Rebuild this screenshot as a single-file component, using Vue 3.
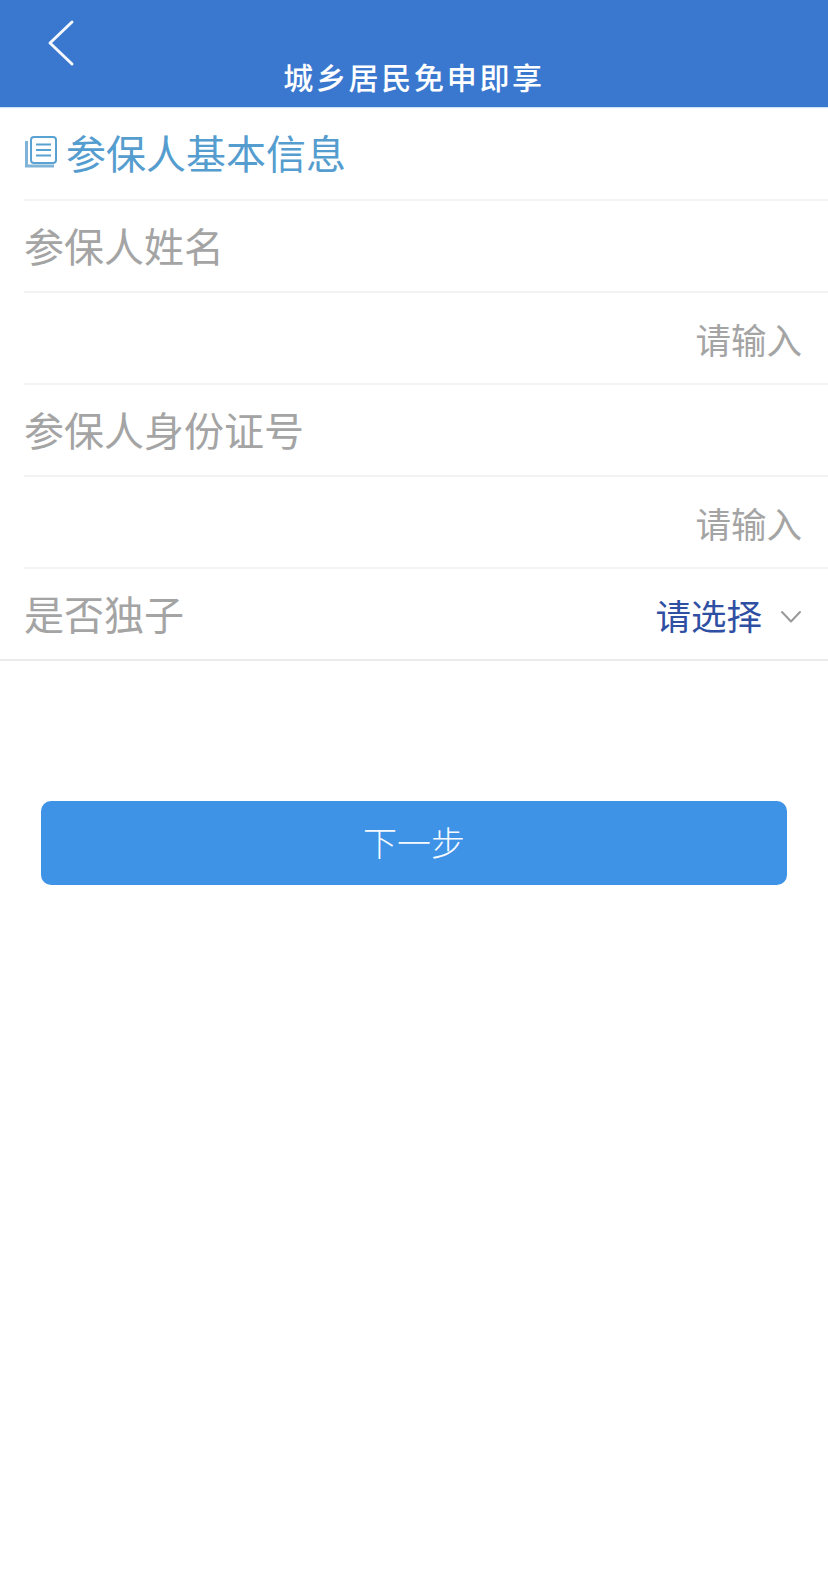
<script setup>
const rows = [
  { text: "参保人姓名", type: "label" },
  { text: "请输入", type: "input" },
  { text: "参保人身份证号", type: "label" },
  { text: "请输入", type: "input" },
];
</script>

<template>
  <div class="page">
    <header class="topbar">
      <svg class="back" width="34" height="50" viewBox="0 0 34 50">
        <path d="M27 4 L5 25 L27 46" fill="none" stroke="#f4f7fc" stroke-width="3" stroke-linecap="round" stroke-linejoin="round" />
      </svg>
      <div class="title">城乡居民免申即享</div>
    </header>

    <section class="form">
      <div class="row heading">
        <svg class="doc" width="34" height="34" viewBox="0 0 34 34">
          <path d="M2.5 6 V31 H30" fill="none" stroke="#7fb4d8" stroke-width="3" />
          <rect x="7" y="2" width="25" height="26" rx="3" fill="none" stroke="#5aa2d2" stroke-width="2" />
          <path d="M12 9.5 H27 M12 15 H27 M12 20.5 H27" stroke="#5aa2d2" stroke-width="2" />
        </svg>
        <span>参保人基本信息</span>
      </div>
      <div v-for="(row, i) in rows" :key="i" class="row" :class="row.type">{{ row.text }}</div>
      <div class="row select">
        <span class="select-label">是否独子</span>
        <span class="select-value">请选择</span>
        <svg class="chevron" width="22" height="14" viewBox="0 0 22 14">
          <path d="M2 2 L11 11.5 L20 2" fill="none" stroke="#999" stroke-width="2" stroke-linecap="round" stroke-linejoin="round" />
        </svg>
      </div>
    </section>

    <button type="button" class="next">下一步</button>
  </div>
</template>

<style>
html,
body {
  background: #fff;
}
</style>

<style scoped>
.page {
  width: 828px;
  height: 1586px;
  background: #fff;
  font-family: "Noto Sans CJK SC", "Liberation Sans", sans-serif;
  overflow: hidden;
}

.topbar {
  position: relative;
  height: 107px;
  background: #3a78cf;
  box-shadow: 0 1px 1px #cfe3f7;
  display: flex;
  justify-content: center;
  align-items: flex-end;
}

.back {
  position: absolute;
  left: 45px;
  top: 18px;
}

.title {
  color: #fff;
  font-size: 30px;
  font-weight: 500;
  letter-spacing: 2.7px;
  line-height: 44px;
  padding-bottom: 9px;
}

.form {
  border-bottom: 2px solid #ebebeb;
}

.row {
  height: 92px;
  box-sizing: border-box;
  margin-left: 24px;
  padding-right: 26px;
  display: flex;
  align-items: center;
  border-bottom: 2px solid #f3f3f3;
}

.heading {
  height: 94px;
  padding-bottom: 2px;
  color: #559dcf;
  font-size: 40px;
  gap: 8px;
}

.doc {
  flex-shrink: 0;
}

.label {
  color: #a4a4a4;
  font-size: 40px;
  padding-bottom: 2px;
}

.input {
  justify-content: flex-end;
  color: #a4a4a4;
  font-size: 35.5px;
  padding-top: 1px;
}

.select {
  border-bottom: none;
  height: 90px;
  padding-right: 26px;
}

.select-label {
  color: #a4a4a4;
  font-size: 40px;
  margin-right: auto;
  margin-bottom: 2px;
}

.select-value {
  color: #2f4fa3;
  font-size: 35.5px;
  margin-right: 18px;
}

.chevron {
  margin-top: 6px;
}

.next {
  display: block;
  width: 746px;
  height: 84px;
  margin: 140px 0 0 41px;
  border: none;
  border-radius: 10px;
  background: #3e93e6;
  color: #f6faff;
  font-family: inherit;
  font-size: 34px;
  font-weight: 300;
  padding: 0 0 3px;
}
</style>
